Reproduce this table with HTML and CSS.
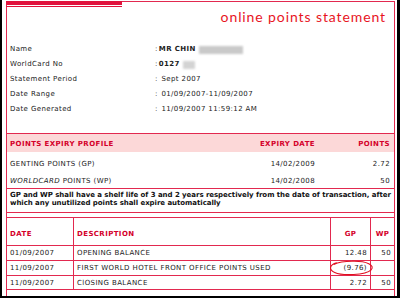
FILE: index.html
```html
<!DOCTYPE html>
<html>
<head>
<meta charset="utf-8">
<link rel="stylesheet" href="styles.css">
</head>
<body>
<div class="frame">
  <div class="page">
    <div class="topbar"></div>
    <div class="topline"></div>
    <div class="head"><span class="title">online points statement</span></div>
    <div class="info">
      <div class="row"><span class="lbl">Name</span><span class="val"><span class="colon">:</span> <b>MR CHIN</b><span class="blur wide"></span></span></div>
      <div class="row"><span class="lbl">WorldCard No</span><span class="val"><span class="colon">:</span> <b>0127</b><span class="blur narrow"></span></span></div>
      <div class="row"><span class="lbl">Statement Period</span><span class="val"><span class="colon">:</span> Sept 2007</span></div>
      <div class="row"><span class="lbl">Date Range</span><span class="val"><span class="colon">:</span> 01/09/2007-11/09/2007</span></div>
      <div class="row"><span class="lbl">Date Generated</span><span class="val"><span class="colon">:</span> 11/09/2007 11:59:12 AM</span></div>
    </div>
    <div class="expiry-box">
      <table class="expiry">
        <colgroup><col><col class="e-date"><col class="e-pts"></colgroup>
        <tr class="hd"><th class="l">POINTS EXPIRY PROFILE</th><th class="r">EXPIRY DATE</th><th class="r">POINTS</th></tr>
        <tr class="r1"><td>GENTING POINTS (GP)</td><td class="r">14/02/2009</td><td class="r">2.72</td></tr>
        <tr class="r2"><td><i>WORLDCARD</i> POINTS (WP)</td><td class="r">14/02/2008</td><td class="r">50</td></tr>
      </table>
    </div>
    <div class="note">GP and WP shall have a shelf life of 3 and 2 years respectively from the date of transaction, after which any unutilized points shall expire automatically</div>
    <div class="tx-box">
      <table class="tx">
        <colgroup><col class="c-date"><col><col class="c-gp"><col class="c-wp"></colgroup>
        <tr class="hd"><th class="l">DATE</th><th class="l">DESCRIPTION</th><th>GP</th><th>WP</th></tr>
        <tr class="t1"><td>01/09/2007</td><td>OPENING BALANCE</td><td class="r">12.48</td><td class="r">50</td></tr>
        <tr class="t2"><td>11/09/2007</td><td>FIRST WORLD HOTEL FRONT OFFICE POINTS USED</td><td class="r circled">(9.76)<svg class="ring" width="48" height="16" viewBox="0 0 50 18" preserveAspectRatio="none"><path d="M9 3 C2 5 0 11 7 14 C15 18 39 17 45 11 C49 6 41 1 25 1.5 C17 1.5 11 2.5 6 5" fill="none" stroke="#e01020" stroke-width="1.2"/></svg></td><td></td></tr>
        <tr class="t3"><td>11/09/2007</td><td>ClOSING BALANCE</td><td class="r">2.72</td><td class="r">50</td></tr>
      </table>
    </div>
  </div>
</div>
</body>
</html>
```
FILE: styles.css
```css
html, body {
  margin: 0;
  padding: 0;
}
body {
  width: 400px;
  height: 300px;
  overflow: hidden;
  background: #fff;
  font-family: "DejaVu Sans", Verdana, sans-serif;
  font-size: 7px;
  letter-spacing: 0.4px;
  color: #222;
}
.frame {
  box-sizing: border-box;
  height: 298px;
  border-left: 2px solid #000;
  border-right: 3px solid #000;
  border-bottom: 2px solid #000;
  padding: 1px 2px 0 4px;
}
.page {
  box-sizing: border-box;
  height: 100%;
  border: 1px solid #e2294f;
  border-bottom: none;
  display: flex;
  flex-direction: column;
}
.topbar {
  width: 116px;
  height: 3px;
  background: #e0123c;
  margin-left: -1px;
  margin-top: -1px;
  border-top: 1px solid #e0123c;
}
.topline {
  width: 116px;
  height: 1px;
  background: #e0123c;
  margin-left: -1px;
  margin-top: 1px;
}
.head {
  box-sizing: border-box;
  height: 35px;
  display: flex;
  justify-content: flex-end;
  padding: 3px 8px 0 0;
}
.title {
  font-family: Lato, "DejaVu Sans", sans-serif;
  font-weight: 400;
  font-size: 14px;
  line-height: 14px;
  color: #e8141e;
  letter-spacing: 0.9px;
}
.info {
  padding-left: 3px;
}
.row {
  display: grid;
  grid-template-columns: 145px auto;
  height: 15px;
  line-height: 15px;
}
.val {
  display: flex;
  align-items: center;
  white-space: pre;
}
.colon { margin-right: 1px; }
.blur {
  display: inline-block;
  height: 8px;
  background: #c9c9c9;
  filter: blur(1px);
  margin-left: 3px;
}
.wide { width: 44px; }
.narrow { width: 12px; opacity: 0.8; }

table {
  border-collapse: separate;
  border-spacing: 0;
  width: 100%;
  table-layout: fixed;
  line-height: 9px;
}
th, td {
  padding: 0 3px;
  white-space: nowrap;
}
th {
  color: #d4002a;
  font-weight: bold;
  text-align: center;
}
.l { text-align: left; }
.r { text-align: right; }

.expiry-box {
  margin-top: 16px;
  border-top: 1px solid #e2294f;
  border-bottom: 1px solid #e2294f;
}
.e-date { width: 110px; }
.e-pts { width: 75px; }
.expiry th, .expiry td {
  vertical-align: bottom;
  padding-bottom: 2px;
}
.expiry th.r, .expiry td.r { padding-right: 4px; }
.expiry tr.hd { height: 18px; }
.expiry .hd th {
  background: #fcd8d8;
  padding-bottom: 3px;
}
.expiry tr.r1 { height: 19px; }
.expiry tr.r2 { height: 17px; }

.note {
  border-bottom: 1px solid #e2294f;
  font-weight: bold;
  color: #111;
  padding: 2px 2px 0 3px;
  line-height: 8px;
  height: 21px;
  letter-spacing: -0.05px;
}

.tx-box {
  margin-top: 4px;
  border-top: 1px solid #e2294f;
}
.tx td, .tx th {
  border-bottom: 1px solid #e2294f;
}
.tx td + td, .tx th + th {
  border-left: 1px solid #e2294f;
}
.tx tr.hd { height: 28px; }
.tx .hd th {
  vertical-align: bottom;
  padding-bottom: 6px;
}
.tx tr.t1, .tx tr.t2 { height: 15px; }
.tx tr.t3 { height: 14px; }
.tx td { vertical-align: middle; padding-top: 1px; }
.tx td.r { padding-right: 3px; }
.c-date { width: 66px; }
.c-gp { width: 40px; }
.c-wp { width: 24px; }
.circled { position: relative; }
.ring {
  position: absolute;
  left: -3px;
  top: -1px;
}
```
